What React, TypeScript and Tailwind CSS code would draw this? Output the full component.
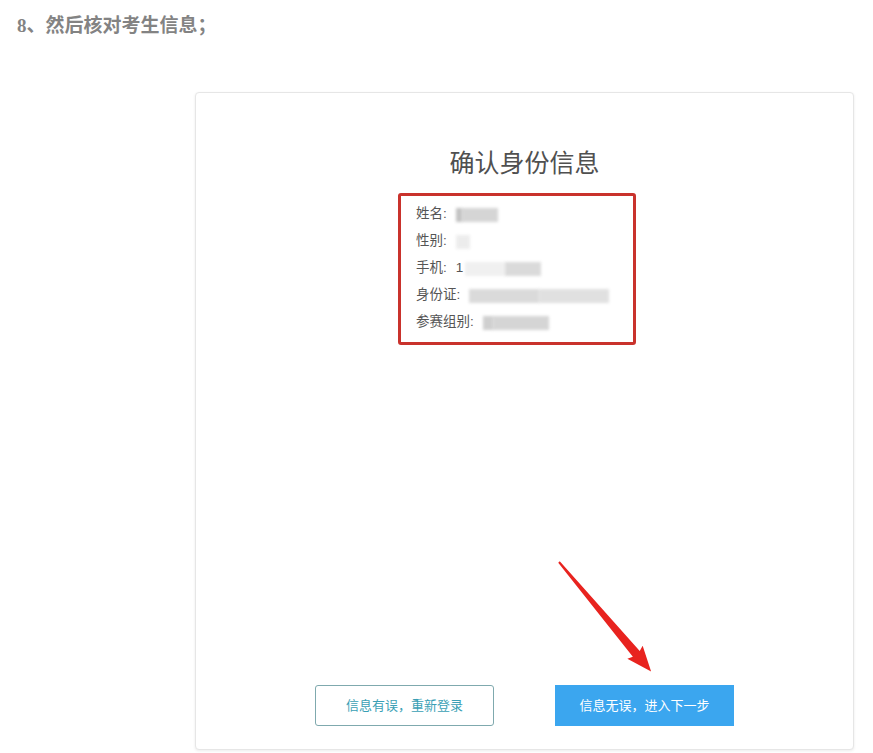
import React from 'react';

const rows = [
  { label: '姓名:', blurs: [{ w: 6, o: 0.5 }, { w: 36, o: 0.35 }] },
  { label: '性别:', blurs: [{ w: 14, o: 0.15 }] },
  { label: '手机:', prefix: '1', blurs: [{ w: 40, o: 0.12 }, { w: 36, o: 0.3 }] },
  { label: '身份证:', blurs: [{ w: 70, o: 0.3 }, { w: 70, o: 0.25 }] },
  { label: '参赛组别:', blurs: [{ w: 10, o: 0.4 }, { w: 56, o: 0.35 }] },
];

function Arrow() {
  return (
    <svg className="pointer-events-none absolute left-[355px] top-[462px]" width="110" height="125" viewBox="0 0 110 125">
      <g transform="translate(8 7) rotate(49.9)">
        <polygon points="0,-1 120,-4.5 118,-10 143,0 118,10 120,4.5 0,1" fill="#e8231f" />
      </g>
    </svg>
  );
}

export default function App() {
  return (
    <div className="min-h-[753px] w-[873px] bg-white" style={{ fontFamily: '"Liberation Sans", "Noto Sans CJK SC", sans-serif' }}>
      <div className="pl-[17px] pt-[13px] text-[19px] font-semibold leading-[26px] text-[#838383]" style={{ fontFamily: '"Liberation Serif", "Noto Sans CJK SC", serif' }}>
        8、然后核对考生信息；
      </div>

      <div className="relative ml-[195px] mt-[53px] flex h-[658px] w-[659px] flex-col rounded-[4px] border border-[#e6e6e6] bg-white pt-[53px] shadow-[0_1px_3px_rgba(0,0,0,0.08)]">
        <h1 className="text-center text-[25px] font-normal leading-[34px] text-[#505050]">确认身份信息</h1>

        <div className="ml-[202px] mt-[13px] w-[238px] rounded-[3px] border-[3px] border-[#c9322c] px-[15px] pb-[6px] pt-[5px]">
          {rows.map(r => (
            <div key={r.label} className="flex h-[27px] items-center text-[13.5px] text-[#555]">
              <span className="mr-[9px]">{r.label}</span>
              {r.prefix && <span className="mr-[2px]">{r.prefix}</span>}
              {r.blurs.map((b, i) => (
                <span key={i} className="h-[14px] bg-[#888] blur-[1.5px]" style={{ width: b.w, opacity: b.o }} />
              ))}
            </div>
          ))}
        </div>

        <div className="flex-1" />

        <div className="flex justify-center gap-[61px] pb-[23px]">
          <button className="h-[41px] w-[179px] rounded-[3px] border border-[#7fa9ae] bg-white text-[13px] text-[#3a9fb5]">
            信息有误，重新登录
          </button>
          <button className="h-[41px] w-[179px] bg-[#3ba6ef] text-[13px] text-white">
            信息无误，进入下一步
          </button>
        </div>

        <Arrow />
      </div>
    </div>
  );
}
